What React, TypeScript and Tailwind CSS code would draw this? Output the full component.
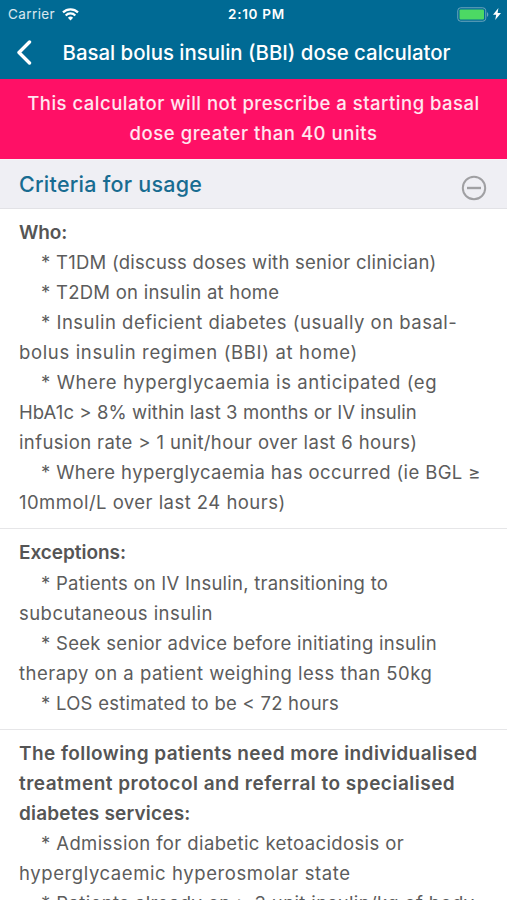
import clsx from "clsx"

interface Line {
  text: string
  spacing: string
  bullet?: boolean
}
interface Section {
  heading: Line[]
  lines: Line[]
}

const sections: Section[] = [
  {
    heading: [{ text: "Who:", spacing: "tracking-[-0.1px]" }],
    lines: [
      { bullet: true, text: "* T1DM (discuss doses with senior clinician)", spacing: "tracking-[0.25px]" },
      { bullet: true, text: "* T2DM on insulin at home", spacing: "tracking-[0.25px]" },
      { bullet: true, text: "* Insulin deficient diabetes (usually on basal-", spacing: "tracking-[0.49px]" },
      { text: "bolus insulin regimen (BBI) at home)", spacing: "tracking-[0.65px]" },
      { bullet: true, text: "* Where hyperglycaemia is anticipated (eg", spacing: "tracking-[0.61px]" },
      { text: "HbA1c > 8% within last 3 months or IV insulin", spacing: "tracking-[0.08px]" },
      { text: "infusion rate > 1 unit/hour over last 6 hours)", spacing: "tracking-[0.38px]" },
      { bullet: true, text: "* Where hyperglycaemia has occurred (ie BGL ≥", spacing: "tracking-[0.38px]" },
      { text: "10mmol/L over last 24 hours)", spacing: "tracking-[0.46px]" },
    ],
  },
  {
    heading: [{ text: "Exceptions:", spacing: "tracking-[-0.05px]" }],
    lines: [
      { bullet: true, text: "* Patients on IV Insulin, transitioning to", spacing: "tracking-[0.24px]" },
      { text: "subcutaneous insulin", spacing: "tracking-[0.45px]" },
      { bullet: true, text: "* Seek senior advice before initiating insulin", spacing: "tracking-[0.29px]" },
      { text: "therapy on a patient weighing less than 50kg", spacing: "tracking-[0.49px]" },
      { bullet: true, text: "* LOS estimated to be < 72 hours", spacing: "tracking-[0.25px]" },
    ],
  },
  {
    heading: [
      { text: "The following patients need more individualised", spacing: "tracking-[0.43px]" },
      { text: "treatment protocol and referral to specialised", spacing: "tracking-[0.49px]" },
      { text: "diabetes services:", spacing: "tracking-[0.18px]" },
    ],
    lines: [
      { bullet: true, text: "* Admission for diabetic ketoacidosis or", spacing: "tracking-[0.39px]" },
      { text: "hyperglycaemic hyperosmolar state", spacing: "tracking-[0.59px]" },
      { bullet: true, text: "* Patients already on > 3 unit insulin/kg of body", spacing: "tracking-[0.38px]" },
    ],
  },
]

function StatusBar() {
  return (
    <div className="grid h-7 grid-cols-3 items-center pr-1.5 pl-2 text-[13.5px] text-white">
      <div className="flex items-center gap-[7px]">
        <span className="tracking-[0.4px] text-white/85">Carrier</span>
        <svg width="17" height="13" viewBox="0 0 17 13" fill="none" stroke="white" strokeWidth="2.2">
          <path d="M1 4.4a10.6 10.6 0 0 1 15 0" />
          <path d="M3.7 7.4a6.7 6.7 0 0 1 9.6 0" />
          <path d="M8.5 12.4 5.9 9.7a3.7 3.7 0 0 1 5.2 0z" fill="white" stroke="none" />
        </svg>
      </div>
      <span className="pl-1 text-center font-semibold tracking-[0.7px]">2:10 PM</span>
      <div className="flex items-center justify-end gap-1">
        <svg width="32" height="15" viewBox="0 0 32 15">
          <rect x="0.75" y="0.75" width="28" height="13.5" rx="3" fill="none" stroke="#6ba5bd" />
          <rect x="2.5" y="2.5" width="24.5" height="10" rx="1" fill="#4cd964" />
          <path d="M30 5.2c1.7.6 1.7 4 0 4.6z" fill="#6ba5bd" />
        </svg>
        <svg width="8" height="12" viewBox="0 0 8 12" fill="white">
          <path d="M5.4 0 0 6.8h3.2L2.2 12 8 4.9H4.6z" />
        </svg>
      </div>
    </div>
  )
}

function TextLine({ line }: { line: Line }) {
  return <div className={clsx("whitespace-nowrap", line.bullet && "pl-[22px]", line.spacing)}>{line.text}</div>
}

export default function App() {
  return (
    <div className="h-[900px] w-[507px] overflow-hidden bg-white font-['Inter',sans-serif]">
      <header className="h-[79px] bg-[#006a94] text-white">
        <StatusBar />
        <div className="flex h-[49px] items-center pl-[15px]">
          <svg width="17" height="26" viewBox="0 0 17 26" fill="none" stroke="white" strokeWidth="3.4" strokeLinecap="round" strokeLinejoin="round">
            <path d="M14.5 2 4 12.5 14.5 23" />
          </svg>
          <h1 className="ml-[30.5px] pt-px text-[20.4px] font-medium whitespace-nowrap">Basal bolus insulin (BBI) dose calculator</h1>
        </div>
      </header>

      <div className="h-20 bg-[#ff1066] pt-[8.5px] text-center text-[18.5px] leading-[30px] font-medium whitespace-nowrap text-white/90">
        <div className="tracking-[0.49px]">This calculator will not prescribe a starting basal</div>
        <div className="tracking-[0.56px]">dose greater than 40 units</div>
      </div>

      <div className="flex h-[50px] items-center justify-between border-t border-b border-t-[#f8f3f7] border-b-[#e2e2e6] bg-[#efeff4] pr-5 pl-[19px]">
        <h2 className="text-[21.5px] font-medium tracking-[0.25px] text-[#186c91]">Criteria for usage</h2>
        <svg className="mt-[7px]" width="26" height="26" viewBox="0 0 26 26" fill="none" stroke="#a0a0a3" strokeWidth="2">
          <circle cx="13" cy="13" r="11.2" />
          <path d="M6 13h14" strokeWidth="2.4" />
        </svg>
      </div>

      {sections.map((s) => (
        <section key={s.heading[0].text} className="border-b border-[#e6e6e8] px-[19px] pt-[9px] pb-[11px] text-[18.5px] leading-[30.05px] text-[#5c5c5c]">
          <h3 className="-mb-px text-[19px] font-semibold text-[#555]">
            {s.heading.map((l) => <TextLine key={l.text} line={l} />)}
          </h3>
          {s.lines.map((l) => <TextLine key={l.text} line={l} />)}
        </section>
      ))}
    </div>
  )
}
